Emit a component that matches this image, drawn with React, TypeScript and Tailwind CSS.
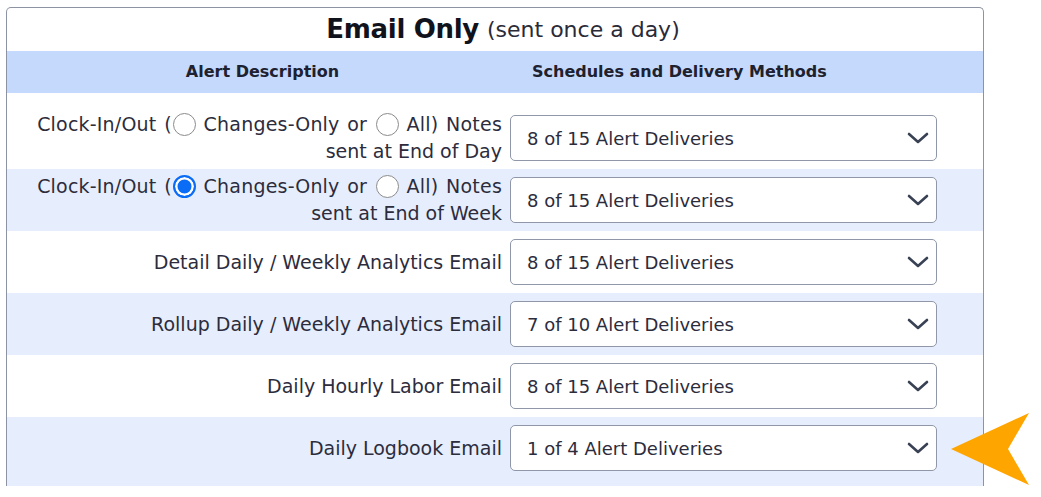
import React from "react";

type Row = {
  label: React.ReactNode;
  value: string;
  shade: boolean;
};

function Radio({ checked }: { checked?: boolean }) {
  if (checked) {
    return (
      <span className="inline-block w-[23px] h-[23px] rounded-full border-2 border-[#0b6cf6] bg-[#0b6cf6] shadow-[inset_0_0_0_2.5px_#ffffff] align-[-5px] ml-[1px]" />
    );
  }
  return (
    <span className="inline-block w-[23px] h-[23px] rounded-full border-[1.5px] border-[#8b8b8b] bg-white align-[-5px] ml-[1px]" />
  );
}

function Chevron() {
  return (
    <svg width="22" height="12" viewBox="0 0 22 12" fill="none" className="shrink-0">
      <polyline
        points="2,2 11,10 20,2"
        stroke="#394154"
        strokeWidth="2.6"
        strokeLinecap="round"
        strokeLinejoin="round"
      />
    </svg>
  );
}

function FakeSelect({ value }: { value: string }) {
  return (
    <div className="flex items-center justify-between h-[46px] w-[427px] rounded-[5px] border-[1.5px] border-[#8f97a8] bg-white pl-[16px] pr-[7px]">
      <span className="text-[18px] text-[#2c2c3c]">{value}</span>
      <Chevron />
    </div>
  );
}

function ClockLabel({ checked, end }: { checked: boolean; end: string }) {
  return (
    <>
      <span className="tracking-[0.2px] [word-spacing:1.5px]">
        Clock-In/Out (<Radio checked={checked} /> Changes-Only or <Radio /> All) Notes
      </span>
      <br />
      sent at End of {end}
    </>
  );
}

const rows: Row[] = [
  { label: <ClockLabel checked={false} end="Day" />, value: "8 of 15 Alert Deliveries", shade: false },
  { label: <ClockLabel checked={true} end="Week" />, value: "8 of 15 Alert Deliveries", shade: true },
  { label: "Detail Daily / Weekly Analytics Email", value: "8 of 15 Alert Deliveries", shade: false },
  { label: "Rollup Daily / Weekly Analytics Email", value: "7 of 10 Alert Deliveries", shade: true },
  { label: "Daily Hourly Labor Email", value: "8 of 15 Alert Deliveries", shade: false },
  { label: "Daily Logbook Email", value: "1 of 4 Alert Deliveries", shade: true },
];

export default function App() {
  return (
    <div
      className="relative w-[1041px] h-[497px] bg-white pt-[7px] pl-[6px] overflow-hidden"
      style={{ fontFamily: '"DejaVu Sans", "Open Sans", sans-serif' }}
    >
      <div className="w-[978px] border-x border-t border-[#8c93a3] rounded-t-[5px] overflow-hidden">
        {/* Title */}
        <div className="h-[43px] flex items-center justify-center pl-[16px] text-[#11131c]">
          <span className="text-[26px] font-bold tracking-[-0.3px]">Email Only</span>
          <span className="text-[22px] ml-[8px] text-[#2a2a38]">(sent once a day)</span>
        </div>

        {/* Header */}
        <div className="h-[42px] flex items-center bg-[#c4d9fb] text-[16px] font-bold text-[#1d2130]">
          <div className="w-[511px] text-center">Alert Description</div>
          <div className="pl-[14px]">Schedules and Delivery Methods</div>
        </div>

        {/* Rows */}
        {rows.map((row, i) => (
          <div
            key={i}
            className={`flex items-center ${row.shade ? "bg-[#e6eefd]" : "bg-white"} ${
              i === 0 ? "pt-[22px] pb-[8px]" : i === rows.length - 1 ? "pt-[8px] pb-[15px]" : "py-[8px]"
            }`}
          >
            <div className="w-[503px] h-[46px] pr-[8px] flex flex-col justify-center">
              <div className="text-right text-[19px] leading-[27px] text-[#2c2c3c] whitespace-nowrap">
                {row.label}
              </div>
            </div>
            <FakeSelect value={row.value} />
          </div>
        ))}
      </div>

      {/* Pointer arrow */}
      <svg
        className="absolute left-[950px] top-[412px]"
        width="81"
        height="74"
        viewBox="0 0 81 74"
      >
        <polygon points="1,37 79,1 58,37 79,73" fill="#ffa500" />
      </svg>
    </div>
  );
}
